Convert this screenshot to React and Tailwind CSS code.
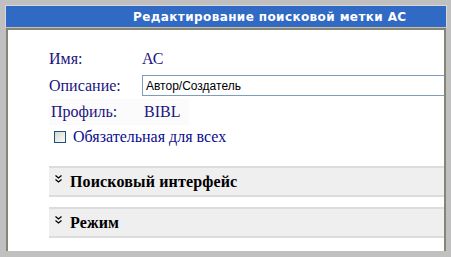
export default function App() {
  const serif = "font-['Liberation_Serif','Times_New_Roman',serif]";
  return (
    <div className="w-[451px] h-[257px] bg-[#c0c0c0] pt-[5px] pl-[5px] overflow-hidden">
      <div className="w-[442px] h-[246px] flex flex-col">
        <div className="h-[23px] shrink-0 bg-[#316ac5] border border-[#d8d8d8] border-b-[#c8c0a8] flex items-center overflow-hidden">
          <span className="pl-[127px] whitespace-nowrap text-white font-bold text-[12px] tracking-[0.4px] font-['DejaVu_Sans',Verdana,sans-serif]">
            Редактирование поисковой метки АС
          </span>
        </div>
        <div className="flex-1 mx-[1px] bg-white border-l-2 border-r-2 border-t-2 border-[#858575] overflow-hidden relative">
          <div className={"w-[600px] pl-[41px] pt-[19px] " + serif}>
            <div className="flex items-end h-[18px] text-[16px] text-[#1c1480] leading-none">
              <span className="w-[93px]">Имя:</span>
              <span>АС</span>
            </div>
            <div className="flex items-center h-[21px] mt-[8px] text-[16px] text-[#1c1480]">
              <span className="w-[93px]">Описание:</span>
              <div className="h-[21px] flex-1 border border-[#7f9db9] pl-[3px] flex items-center text-[12px] text-black font-['Liberation_Sans',Arial,sans-serif]">
                Автор/Создатель
              </div>
            </div>
            <div className="flex items-center h-[26px] mt-[3px] w-[140px] bg-[#fbfbfb] text-[16px] text-[#1c1480]">
              <span className="w-[95px] pl-[2px]">Профиль:</span>
              <span>BIBL</span>
            </div>
            <div className="flex items-center h-[16px] mt-[4px] pl-[5px] text-[16px] text-[#0c0c8c]">
              <span className="w-[12px] h-[12px] border border-[#1c5180] bg-gradient-to-br from-[#d8d8d2] to-[#fbfbf9]"></span>
              <span className="ml-[7px]">Обязательная для всех</span>
            </div>
            <div className="mt-[21px] h-[31px] bg-[#efefef] border-t-2 border-b-2 border-[#dcdcdc] flex items-center text-black font-bold text-[16px] tracking-[0.15px]">
              <svg width="7" height="8" viewBox="0 0 7 8" className="ml-[6px] mr-[8px] mb-[5px]">
                <path d="M0.5 0.5 L3.5 3 L6.5 0.5 M0.5 4.5 L3.5 7 L6.5 4.5" stroke="#000" strokeWidth="1.3" fill="none" />
              </svg>
              <span>Поисковый интерфейс</span>
            </div>
            <div className="mt-[10px] h-[31px] bg-[#efefef] border-t-2 border-b-2 border-[#dcdcdc] flex items-center text-black font-bold text-[16px] tracking-[0.15px]">
              <svg width="7" height="8" viewBox="0 0 7 8" className="ml-[6px] mr-[8px] mb-[5px]">
                <path d="M0.5 0.5 L3.5 3 L6.5 0.5 M0.5 4.5 L3.5 7 L6.5 4.5" stroke="#000" strokeWidth="1.3" fill="none" />
              </svg>
              <span>Режим</span>
            </div>
          </div>
        </div>
      </div>
    </div>
  );
}
